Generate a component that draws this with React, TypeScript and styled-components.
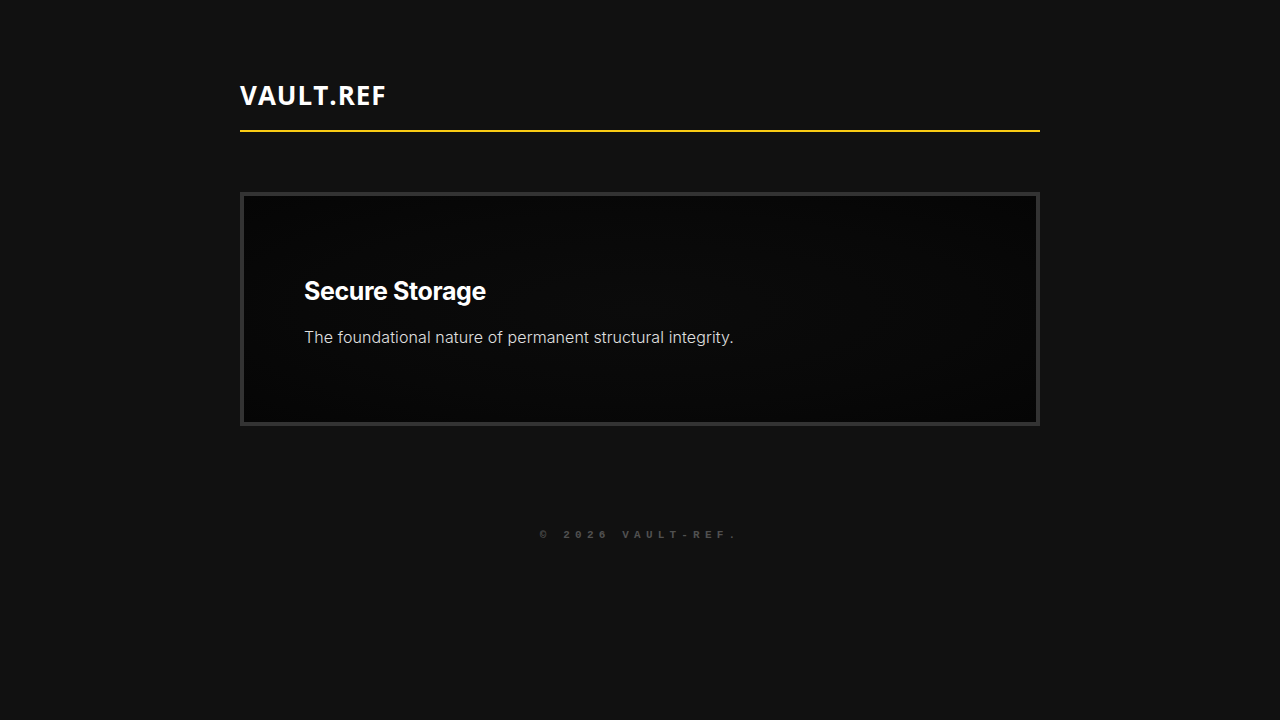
import React from "react";
import styled, { createGlobalStyle } from "styled-components";

const Global = createGlobalStyle`
  html, body { margin: 0; padding: 0; background: #111111; }
  body { font-family: Inter, "Noto Sans", sans-serif; color: #fff; }
  * { box-sizing: border-box; }
`;

const Page = styled.div`
  width: 800px;
  margin: 0 auto;
  padding-top: 80px;
`;

const Header = styled.header`
  padding-bottom: 19px;
  border-bottom: 2px solid #facc15;
`;

const Logo = styled.div`
  font-family: "Open Sans", "Noto Sans", sans-serif;
  font-weight: 700;
  font-size: 26px;
  line-height: 31px;
  letter-spacing: 1px;
  color: #ffffff;
`;

const Main = styled.main`
  margin-top: 60px;
`;

const Card = styled.section`
  border: 4px solid #333333;
  background: radial-gradient(ellipse at center, #0b0b0b 0%, #080808 60%, #050505 100%);
  padding: 79px 60px 73px;
`;

const Title = styled.h2`
  margin: 0 0 18px;
  font-family: Inter, "Noto Sans", sans-serif;
  font-weight: 700;
  font-size: 25px;
  line-height: 32px;
  letter-spacing: -0.4px;
  color: #ffffff;
`;

const Text = styled.p`
  margin: 0;
  font-family: Inter, "Noto Sans", sans-serif;
  font-weight: 300;
  font-size: 16px;
  line-height: 24px;
  letter-spacing: 0.1px;
  color: #e0e0e0;
`;

const Footer = styled.footer`
  margin-top: 101px;
  text-align: center;
  font-family: "Liberation Mono", "DejaVu Sans Mono", monospace;
  font-weight: 700;
  font-size: 11px;
  line-height: 16px;
  letter-spacing: 5.2px;
  color: #505050;
`;

export default function App() {
  return (
    <>
      <Global />
      <Page>
        <Header>
          <Logo>VAULT.REF</Logo>
        </Header>
        <Main>
          <Card>
            <Title>Secure Storage</Title>
            <Text>The foundational nature of permanent structural integrity.</Text>
          </Card>
        </Main>
        <Footer>© 2026 VAULT-REF.</Footer>
      </Page>
    </>
  );
}
